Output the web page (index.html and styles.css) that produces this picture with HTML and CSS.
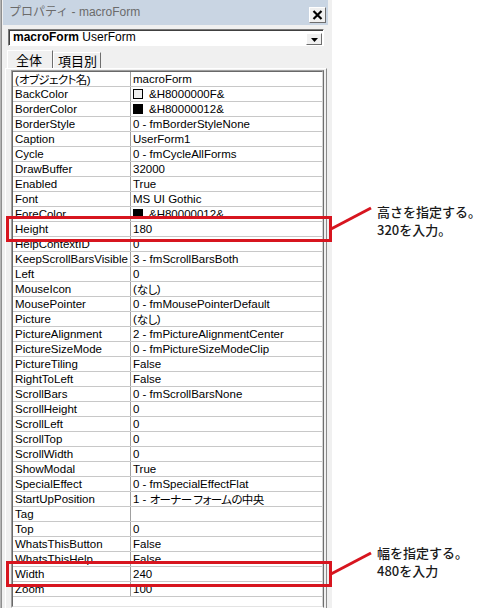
FILE: index.html
```html
<!DOCTYPE html>
<html lang="ja">
<head>
<meta charset="utf-8">
<title>プロパティ - macroForm</title>
<link rel="stylesheet" href="styles.css">
</head>
<body>
<div class="stage">
  <div class="panel">
    <div class="titlebar">
      <span class="title">プロパティ - macroForm</span>
      <span class="close">
        <svg width="11" height="10" viewBox="0 0 11 10"><path d="M1.5 1 L9.5 9 M9.5 1 L1.5 9" stroke="#000" stroke-width="2.2" fill="none"/></svg>
      </span>
    </div>
    <div class="combo">
      <span class="combo-text"><b>macroForm</b> UserForm</span>
      <span class="combo-btn"><svg width="7" height="4" viewBox="0 0 7 4"><path d="M0 0 H7 L3.5 4 Z" fill="#000"/></svg></span>
    </div>
    <div class="tabs">
      <div class="tab active">全体</div>
      <div class="tab">項目別</div>
    </div>
    <div class="page">
      <div class="grid">
        <div class="grid-inner">
          <div class="row"><span class="name">(<span class="jp">オブジェクト名</span>)</span><span class="val">macroForm</span></div>
          <div class="row"><span class="name">BackColor</span><span class="val"><i class="swatch light"></i>&amp;H8000000F&amp;</span></div>
          <div class="row"><span class="name">BorderColor</span><span class="val"><i class="swatch dark"></i>&amp;H80000012&amp;</span></div>
          <div class="row"><span class="name">BorderStyle</span><span class="val">0 - fmBorderStyleNone</span></div>
          <div class="row"><span class="name">Caption</span><span class="val">UserForm1</span></div>
          <div class="row"><span class="name">Cycle</span><span class="val">0 - fmCycleAllForms</span></div>
          <div class="row"><span class="name">DrawBuffer</span><span class="val">32000</span></div>
          <div class="row"><span class="name">Enabled</span><span class="val">True</span></div>
          <div class="row"><span class="name">Font</span><span class="val">MS UI Gothic</span></div>
          <div class="row"><span class="name">ForeColor</span><span class="val"><i class="swatch dark"></i>&amp;H80000012&amp;</span></div>
          <div class="row"><span class="name">Height</span><span class="val">180</span></div>
          <div class="row"><span class="name">HelpContextID</span><span class="val">0</span></div>
          <div class="row"><span class="name">KeepScrollBarsVisible</span><span class="val">3 - fmScrollBarsBoth</span></div>
          <div class="row"><span class="name">Left</span><span class="val">0</span></div>
          <div class="row"><span class="name">MouseIcon</span><span class="val">(<span class="jp">なし</span>)</span></div>
          <div class="row"><span class="name">MousePointer</span><span class="val">0 - fmMousePointerDefault</span></div>
          <div class="row"><span class="name">Picture</span><span class="val">(<span class="jp">なし</span>)</span></div>
          <div class="row"><span class="name">PictureAlignment</span><span class="val">2 - fmPictureAlignmentCenter</span></div>
          <div class="row"><span class="name">PictureSizeMode</span><span class="val">0 - fmPictureSizeModeClip</span></div>
          <div class="row"><span class="name">PictureTiling</span><span class="val">False</span></div>
          <div class="row"><span class="name">RightToLeft</span><span class="val">False</span></div>
          <div class="row"><span class="name">ScrollBars</span><span class="val">0 - fmScrollBarsNone</span></div>
          <div class="row"><span class="name">ScrollHeight</span><span class="val">0</span></div>
          <div class="row"><span class="name">ScrollLeft</span><span class="val">0</span></div>
          <div class="row"><span class="name">ScrollTop</span><span class="val">0</span></div>
          <div class="row"><span class="name">ScrollWidth</span><span class="val">0</span></div>
          <div class="row"><span class="name">ShowModal</span><span class="val">True</span></div>
          <div class="row"><span class="name">SpecialEffect</span><span class="val">0 - fmSpecialEffectFlat</span></div>
          <div class="row"><span class="name">StartUpPosition</span><span class="val">1 -&nbsp;<span class="jp">オーナー フォームの中央</span></span></div>
          <div class="row"><span class="name">Tag</span><span class="val"></span></div>
          <div class="row"><span class="name">Top</span><span class="val">0</span></div>
          <div class="row"><span class="name">WhatsThisButton</span><span class="val">False</span></div>
          <div class="row"><span class="name">WhatsThisHelp</span><span class="val">False</span></div>
          <div class="row"><span class="name">Width</span><span class="val">240</span></div>
          <div class="row"><span class="name">Zoom</span><span class="val">100</span></div>
        </div>
      </div>
    </div>
  </div>

  <div class="mark mark-height"></div>
  <div class="mark mark-width"></div>
  <svg class="callouts" width="500" height="608" viewBox="0 0 500 608">
    <line x1="331" y1="229" x2="371" y2="208" stroke="#d7151f" stroke-width="3"/>
    <line x1="331" y1="574" x2="371" y2="553" stroke="#d7151f" stroke-width="3"/>
  </svg>
  <div class="note note-height">高さを指定する。<br>320を入力。</div>
  <div class="note note-width">幅を指定する。<br>480を入力</div>
</div>
</body>
</html>
```

FILE: styles.css
```css
html, body {
  margin: 0;
  padding: 0;
  background: #ffffff;
}

body {
  font-family: "Liberation Sans", "Noto Sans CJK JP", sans-serif;
  color: #000;
}

.stage {
  position: relative;
  width: 500px;
  height: 608px;
  overflow: hidden;
}

/* ---------- panel ---------- */
.panel {
  box-sizing: border-box;
  width: 332px;
  height: 608px;
  padding: 0 4px 0 3px;
  background: #f0f0f0;
  box-shadow: inset 1px 0 0 #b4b4b4, inset 2px 0 0 #8e8e8e;
  display: flex;
  flex-direction: column;
}

.titlebar {
  height: 25px;
  flex: none;
  background: #c9d5e3;
  display: flex;
  align-items: center;
  justify-content: space-between;
  padding: 0 2px 0 6px;
}

.title {
  font-size: 12px;
  color: #6b6b6b;
  line-height: 25px;
}

.close {
  box-sizing: border-box;
  width: 17px;
  height: 16px;
  margin-top: 5px;
  background: #f0f0f0;
  border: 1px solid;
  border-color: #ffffff #6e6e6e #6e6e6e #ffffff;
  display: flex;
  align-items: center;
  justify-content: center;
}

.combo {
  flex: none;
  box-sizing: border-box;
  height: 17px;
  margin: 4px 4px 0 5px;
  background: #ffffff;
  border: 1px solid;
  border-color: #7a7a7a #ffffff #ffffff #7a7a7a;
  box-shadow: inset 1px 1px 0 #404040;
  display: flex;
  align-items: center;
  justify-content: space-between;
  padding: 0 1px 0 4px;
}

.combo-text {
  font-size: 12px;
  line-height: 15px;
  white-space: nowrap;
}

.combo-text b {
  font-weight: bold;
}

.combo-btn {
  box-sizing: border-box;
  width: 16px;
  height: 12px;
  margin-top: 2px;
  background: #f0f0f0;
  border: 1px solid;
  border-color: #ffffff #6e6e6e #6e6e6e #ffffff;
  display: flex;
  align-items: center;
  justify-content: center;
  padding-top: 2px;
}

/* ---------- tabs ---------- */
.tabs {
  flex: none;
  display: flex;
  align-items: flex-end;
  height: 18px;
  margin-top: 4px;
  padding-left: 4px;
}

.tab {
  box-sizing: border-box;
  height: 16px;
  padding: 0 4px;
  font-family: "Noto Sans CJK JP", sans-serif;
  font-size: 13px;
  line-height: 15px;
  color: #000;
  white-space: nowrap;
  border-top: 1px solid #ffffff;
  border-left: 1px solid #ffffff;
  border-right: 1px solid #6e6e6e;
  background: #f0f0f0;
}

.tab.active {
  width: 46px;
  height: 18px;
  padding-left: 8px;
  line-height: 17px;
}

.tab + .tab {
  width: 48px;
  padding-left: 4px;
}

/* ---------- tab page & grid ---------- */
.page {
  flex: 1;
  min-height: 0;
  margin: 0 1px 0 2px;
  padding: 1px 2px 0 5px;
  border-top: 1px solid #ffffff;
  border-left: 1px solid #ffffff;
  border-right: 1px solid #8a8a8a;
  display: flex;
  flex-direction: column;
}

.grid {
  flex: 1;
  min-height: 0;
  border: 1px solid;
  border-color: #a0a0a0 #6e6e6e #ffffff #a0a0a0;
  background: #ffffff;
}

.grid-inner {
  height: 100%;
  box-sizing: border-box;
  border: 1px solid;
  border-color: #696969 #d4d4d4 #e3e3e3 #696969;
  background: #ffffff;
}

.row {
  display: grid;
  grid-template-columns: 118px 1fr;
  height: 15px;
  box-sizing: border-box;
  border-bottom: 1px solid #c8c8c8;
  font-size: 11.5px;
  line-height: 14px;
  white-space: nowrap;
}

.jp {
  font-family: "Noto Sans CJK JP", sans-serif;
  font-feature-settings: "palt";
  letter-spacing: -0.6px;
}

.name {
  padding-left: 2px;
  border-right: 1px solid #a0a0a0;
  overflow: hidden;
}

.val {
  padding-left: 2px;
  display: flex;
  align-items: center;
  overflow: hidden;
}

.swatch {
  box-sizing: border-box;
  width: 10px;
  height: 10px;
  margin-right: 6px;
  border: 1px solid #000;
  flex: none;
}

.swatch.light {
  background: #f0f0f0;
}

.swatch.dark {
  background: #000;
}

/* ---------- annotations ---------- */
.mark {
  position: absolute;
  left: 6px;
  width: 326px;
  height: 26px;
  box-sizing: border-box;
  border: 3px solid #d7151f;
}

.mark-height {
  top: 216px;
}

.mark-width {
  top: 561px;
}

.callouts {
  position: absolute;
  left: 0;
  top: 0;
}

.note {
  position: absolute;
  left: 377px;
  font-family: "Noto Sans CJK JP", sans-serif;
  font-size: 13px;
  font-weight: 500;
  line-height: 18px;
  color: #1a1a1a;
  white-space: nowrap;
}

.note-height {
  top: 203px;
}

.note-width {
  top: 544px;
}
```
